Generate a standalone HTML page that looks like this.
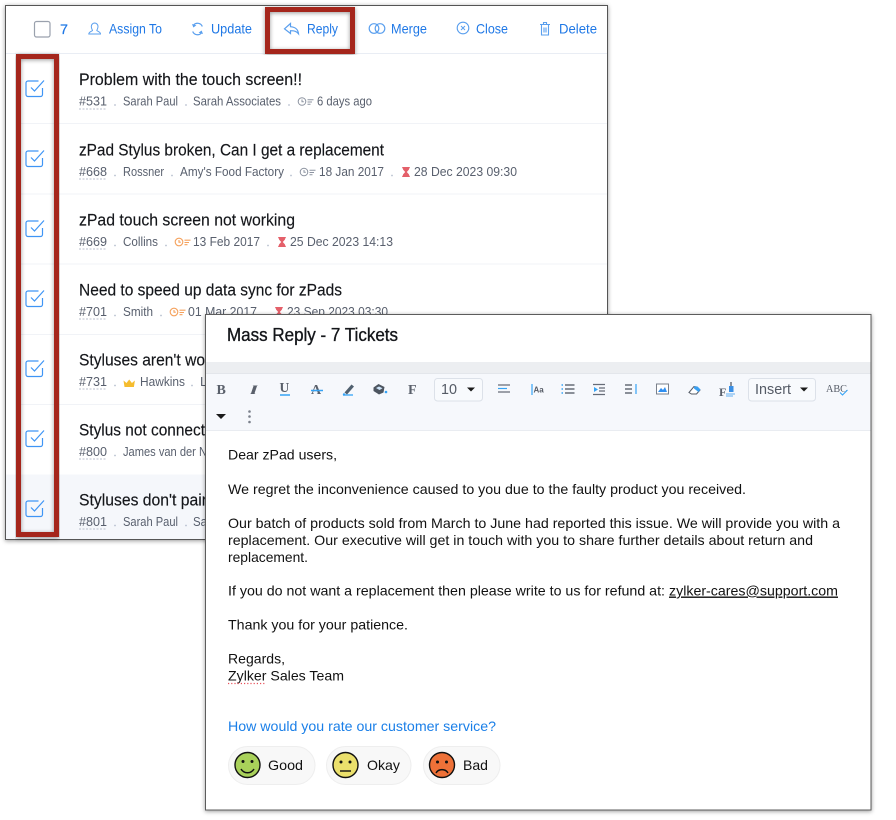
<!DOCTYPE html>
<html><head><meta charset="utf-8"><style>
html,body{margin:0;padding:0;background:#fff;width:896px;height:820px;overflow:hidden}
svg{display:block}
text{font-family:"Liberation Sans",sans-serif}
.t{font-size:17px;fill:#14161a;stroke:#14161a;stroke-width:.15px}
.m{font-size:13px;fill:#59606e}
.a{font-size:14px;fill:#1f78e6}
.b{font-size:14px;fill:#111}
.s{font-family:"Liberation Serif",serif;font-weight:bold;fill:#5a606b}
</style></head><body>
<svg width="896" height="820" viewBox="0 0 896 820" xmlns="http://www.w3.org/2000/svg">
<defs>
<filter id="s" x="-8%" y="-8%" width="116%" height="116%"><feDropShadow dx="0" dy="1" stdDeviation="2" flood-color="#000" flood-opacity=".4"/></filter>
<g id="cb" fill="none" stroke="#3f95f5" stroke-width="1.200"><path d="M42.500 88v6.500a2 2 0 0 1-2 2H28a2 2 0 0 1-2-2V83a2 2 0 0 1 2-2h10.500"/><path d="M31 87.500l3.500 3.500 9.500-10.500"/></g>
<g id="clk" fill="none" stroke="#8c93a0" stroke-width="1"><circle cx="0" cy="0" r="3.800"/><path d="M0-2v2.200h1.800M5.500-1.800h6M5.500 0.500h4.500M5.500 2.700h3"/></g>
<g id="clko" fill="none" stroke="#f5a15c" stroke-width="1.100"><circle cx="0" cy="0" r="3.800"/><path d="M0-2v2.200h1.800M5.500-1.800h6M5.500 0.500h4.500M5.500 2.700h3"/></g>
<g id="hg"><path d="M-3.800-5h7.600v1.400h-.8v1.100L.8 0l2.200 2.500v1.100h.8V5h-7.600V3.600h.8V2.500L-.8 0-3-2.500v-1.100h-.8z" fill="#e4606a"/></g>
<path id="dash" d="M79 109h28" stroke="#b9bfcc" stroke-width="1" stroke-dasharray="2 1.500"/>
</defs>

<!-- back panel -->
<rect x="5.500" y="5.500" width="602" height="534" fill="#fff" stroke="#555" filter="url(#s)"/>
<rect x="6" y="474.500" width="601" height="64.500" fill="#f5f7fb"/>
<path d="M6 53.500h601" stroke="#e9edf4"/>
<path d="M21 123.500h586M21 194h586M21 264h586M21 334.500h586M21 404.500h586" stroke="#f1f3f7"/>

<!-- header -->
<rect x="34.500" y="21.500" width="15.500" height="15.500" rx="2" fill="#fff" stroke="#9aa1ad" stroke-width="1.200"/>
<text x="60" y="34" class="a" textLength="8" lengthAdjust="spacingAndGlyphs" style="stroke:#1f78e6;stroke-width:.2px">7</text>
<g fill="none" stroke="#5a9fee" stroke-width="1">
<path d="M94.500 23a3.500 3.500 0 0 1 3.500 3.500c0 2-1 3-1.200 4 .2.700 3.700 1.200 3.700 3.500H88.800c0-2.300 3.500-2.800 3.700-3.500-.2-1-1.200-2-1.200-4A3.500 3.500 0 0 1 94.500 23z"/>
<path d="M202.300 26.500a5.200 5.200 0 0 0-8.700-1.500M192.700 31.500a5.200 5.200 0 0 0 8.700 1.500" stroke-width="1.200"/>
<path d="M192.500 24.500l1 2.500 2.200-1.500zM202.500 33.500l-1-2.500-2.200 1.500z" fill="#5a9fee" stroke-width=".6"/>
<path d="M290.500 23.500l-6 5.300 6 4.700v-2.800c4 0 6 .5 8 3-.5-4.500-3-6.500-8-7z" stroke-width="1.200"/>
<circle cx="374" cy="28.500" r="4.800" stroke-width="1.200"/><circle cx="380" cy="28.500" r="4.800" stroke-width="1.200"/>
<circle cx="463" cy="28" r="5.800" stroke-width="1.100"/><path d="M461 26l4 4M465 26l-4 4"/>
<path d="M540 24.500h10M541.500 24.500v10.500h7V24.500M543.500 24.500v-2h3v2M544 27.500v5M546 27.500v5" stroke-width="1.100"/>
</g>
<text x="109" y="33.500" class="a" textLength="53" lengthAdjust="spacingAndGlyphs">Assign To</text>
<text x="211" y="33.500" class="a" textLength="41" lengthAdjust="spacingAndGlyphs">Update</text>
<text x="307" y="33.500" class="a" textLength="31" lengthAdjust="spacingAndGlyphs">Reply</text>
<text x="391" y="33.500" class="a" textLength="36" lengthAdjust="spacingAndGlyphs">Merge</text>
<text x="476" y="33.500" class="a" textLength="32" lengthAdjust="spacingAndGlyphs">Close</text>
<text x="559" y="33.500" class="a" textLength="38" lengthAdjust="spacingAndGlyphs">Delete</text>

<!-- rows -->
<text x="79" y="85" class="t" textLength="223" lengthAdjust="spacingAndGlyphs">Problem with the touch screen!!</text>
<text x="79" y="155.500" class="t" textLength="305" lengthAdjust="spacingAndGlyphs">zPad Stylus broken, Can I get a replacement</text>
<text x="79" y="225.500" class="t" textLength="216" lengthAdjust="spacingAndGlyphs">zPad touch screen not working</text>
<text x="79" y="295.500" class="t" textLength="263" lengthAdjust="spacingAndGlyphs">Need to speed up data sync for zPads</text>
<text x="79" y="365.500" class="t" textLength="126" lengthAdjust="spacingAndGlyphs">Styluses aren't wo</text>
<text x="79" y="435.500" class="t" textLength="126" lengthAdjust="spacingAndGlyphs">Stylus not connect</text>
<text x="79" y="505.500" class="t" textLength="128" lengthAdjust="spacingAndGlyphs">Styluses don't pair</text>

<use href="#dash"/><use href="#dash" y="70"/><use href="#dash" y="140"/><use href="#dash" y="210"/><use href="#dash" y="280"/><use href="#dash" y="350"/><use href="#dash" y="420"/>

<text class="m" x="79" y="105.500" textLength="28" lengthAdjust="spacingAndGlyphs">#531</text>
<text class="m" x="123" y="105.500" textLength="55" lengthAdjust="spacingAndGlyphs">Sarah Paul</text>
<text class="m" x="193" y="105.500" textLength="88" lengthAdjust="spacingAndGlyphs">Sarah Associates</text>
<text class="m" x="317" y="105.500" textLength="55" lengthAdjust="spacingAndGlyphs">6 days ago</text>
<text class="m" x="79" y="176" textLength="28" lengthAdjust="spacingAndGlyphs">#668</text>
<text class="m" x="123" y="176" textLength="41" lengthAdjust="spacingAndGlyphs">Rossner</text>
<text class="m" x="180" y="176" textLength="104" lengthAdjust="spacingAndGlyphs">Amy's Food Factory</text>
<text class="m" x="319" y="176" textLength="65" lengthAdjust="spacingAndGlyphs">18 Jan 2017</text>
<text class="m" x="414" y="176" textLength="103" lengthAdjust="spacingAndGlyphs">28 Dec 2023 09:30</text>
<text class="m" x="79" y="246" textLength="28" lengthAdjust="spacingAndGlyphs">#669</text>
<text class="m" x="123" y="246" textLength="35" lengthAdjust="spacingAndGlyphs">Collins</text>
<text class="m" x="193" y="246" textLength="67" lengthAdjust="spacingAndGlyphs">13 Feb 2017</text>
<text class="m" x="290" y="246" textLength="103" lengthAdjust="spacingAndGlyphs">25 Dec 2023 14:13</text>
<text class="m" x="79" y="316" textLength="28" lengthAdjust="spacingAndGlyphs">#701</text>
<text class="m" x="123" y="316" textLength="30" lengthAdjust="spacingAndGlyphs">Smith</text>
<text class="m" x="188" y="316" textLength="69" lengthAdjust="spacingAndGlyphs">01 Mar 2017</text>
<text class="m" x="287" y="316" textLength="101" lengthAdjust="spacingAndGlyphs">23 Sep 2023 03:30</text>
<text class="m" x="79" y="386" textLength="28" lengthAdjust="spacingAndGlyphs">#731</text>
<text class="m" x="140" y="386" textLength="45" lengthAdjust="spacingAndGlyphs">Hawkins</text>
<text class="m" x="200" y="386">L</text>
<text class="m" x="79" y="456" textLength="28" lengthAdjust="spacingAndGlyphs">#800</text>
<text class="m" x="123" y="456" textLength="84" lengthAdjust="spacingAndGlyphs">James van der N</text>
<text class="m" x="79" y="526" textLength="28" lengthAdjust="spacingAndGlyphs">#801</text>
<text class="m" x="123" y="526" textLength="55" lengthAdjust="spacingAndGlyphs">Sarah Paul</text>
<text class="m" x="193" y="526" textLength="14" lengthAdjust="spacingAndGlyphs">Sa</text>
<g fill="#b8c0cf">
<circle cx="115" cy="105" r=".9"/><circle cx="186" cy="105" r=".9"/><circle cx="289" cy="105" r=".9"/>
<circle cx="115" cy="175.500" r=".9"/><circle cx="172" cy="175.500" r=".9"/><circle cx="291" cy="175.500" r=".9"/><circle cx="392" cy="175.500" r=".9"/>
<circle cx="115" cy="245.500" r=".9"/><circle cx="166" cy="245.500" r=".9"/><circle cx="268" cy="245.500" r=".9"/>
<circle cx="115" cy="315.500" r=".9"/><circle cx="161" cy="315.500" r=".9"/><circle cx="266" cy="315.500" r=".9"/>
<circle cx="115" cy="385.500" r=".9"/><circle cx="192" cy="385.500" r=".9"/>
<circle cx="115" cy="455.500" r=".9"/>
<circle cx="115" cy="525.500" r=".9"/><circle cx="186" cy="525.500" r=".9"/>
</g>
<use href="#clk" x="302" y="101.500"/><use href="#clk" x="304" y="172"/>
<use href="#clko" x="179" y="242"/><use href="#clko" x="174" y="312"/>
<use href="#hg" x="406" y="172"/><use href="#hg" x="282" y="242"/><use href="#hg" x="279" y="312"/>
<path d="M123.500 380.500l3 2.500 2.700-3.500 2.700 3.500 3-2.500-1 6.500h-9.400z" fill="#f5bc2e"/>

<!-- checkboxes -->
<use href="#cb"/><use href="#cb" y="70"/><use href="#cb" y="140"/><use href="#cb" y="210"/><use href="#cb" y="280"/><use href="#cb" y="350"/><use href="#cb" y="420"/>

<!-- red highlights -->
<rect x="18.500" y="56.500" width="38" height="478" fill="none" stroke="#a5281b" stroke-width="5" filter="url(#s)"/>
<rect x="267.500" y="9.500" width="85" height="42" fill="none" stroke="#a5281b" stroke-width="5" filter="url(#s)"/>

<!-- front panel -->
<rect x="205.500" y="314.500" width="665.500" height="495.500" fill="#fff" stroke="#5c5c5c" filter="url(#s)"/>
<text x="227" y="341" style="font-size:18px;fill:#14161a;stroke:#14161a;stroke-width:.35px" textLength="171" lengthAdjust="spacingAndGlyphs">Mass Reply - 7 Tickets</text>
<rect x="206" y="362" width="664.500" height="11" fill="#eceef1"/>
<rect x="206" y="373" width="664.500" height="57" fill="#f6f8fc"/>
<path d="M206 373.500h664.500" stroke="#e3e6eb"/><path d="M206 430.500h664.500" stroke="#e9ecf1"/>

<!-- toolbar -->
<text x="216.500" y="394" class="s" style="font-size:14px">B</text>
<path d="M250 394l1-.6 2.500-7.400-1-.5h5.500l-1 .5-2.500 7.400 1 .6z" fill="#5a606b"/>
<text x="279.500" y="392" class="s" style="font-size:13.500px">U</text>
<text x="311" y="394" class="s" style="font-size:14px">A</text>
<text x="408" y="394" class="s" style="font-size:14px">F</text>
<text x="719" y="396" class="s" style="font-size:12px">F</text>
<path d="M280 395h10" stroke="#35a3f5" stroke-width="1.500"/>
<path d="M311 390.500h12" stroke="#35a3f5" stroke-width="1.500"/>
<path d="M344.500 392.500l7-8 2.500 2-7 8z" fill="#50606f"/><path d="M343 395h10" stroke="#35a3f5" stroke-width="1.300"/><circle cx="344" cy="394.500" r="1.200" fill="#35a3f5"/>
<path d="M373.500 387.500l5-3.500 6 3-1 5.500-4.500 2-5.500-3.500z" fill="#4d5560"/><path d="M376 388l3-1.500 3.500 1.800-3 1.700z" fill="#cfe6fb"/><circle cx="386" cy="392" r="1.300" fill="#35a3f5"/>
<path d="M498 385h12M498 392h12" stroke="#666c77" stroke-width="1.200"/><path d="M498 388.500h9" stroke="#35a3f5" stroke-width="1.200"/>
<path d="M532 384v11" stroke="#35a3f5" stroke-width="1.200"/>
<text x="533.500" y="392.500" style="font-size:8px;font-weight:bold" fill="#555b66">Aa</text>
<path d="M561.500 385h1.500M561.500 389h1.500M561.500 393h1.500" stroke="#35a3f5" stroke-width="1.500"/>
<path d="M565 385h9.500M565 389h9.500M565 393h9.500" stroke="#666c77" stroke-width="1.400"/>
<path d="M593 384.500h12M599 388h6M599 391h6M593 394.500h12" stroke="#666c77" stroke-width="1.200"/><path d="M594 387l4 2.500-4 2.500z" fill="#35a3f5"/>
<path d="M625 385h7M625 389h7M625 393h7" stroke="#666c77" stroke-width="1.400"/><path d="M636 384v10" stroke="#35a3f5" stroke-width="1.200"/>
<rect x="656.500" y="384" width="12" height="10" fill="#fff" stroke="#7a808b"/><path d="M658 392l3-4 2 2 2-3 2 5z" fill="#2f8ef0"/>
<path d="M689 392.500l5-6 3 .5 3 3-3.500 4h-5z" fill="#fff" stroke="#555b66"/><path d="M694 386.500h3.500l3 3-2 2.500-4.500-3.500z" fill="#3aa0f2"/>
<rect x="729" y="386" width="4.500" height="6" fill="#3a8fe5"/><path d="M731 382v4" stroke="#555b66" stroke-width="1.300"/><path d="M726 394h9M726 396h7" stroke="#7fbdf3" stroke-width="1.200"/>
<text x="826" y="392" style="font-size:11px;font-family:'Liberation Serif',serif" fill="#555b66" textLength="21" lengthAdjust="spacingAndGlyphs">ABC</text>
<path d="M840 392.500l2.500 2.500 5-5" fill="none" stroke="#35a3f5" stroke-width="1.100"/>

<rect x="434.500" y="378.500" width="48" height="22.500" rx="3" fill="#f8fafd" stroke="#dce1e9"/>
<text x="441" y="394" style="font-size:15px" fill="#555b66" textLength="16" lengthAdjust="spacingAndGlyphs">10</text>
<path d="M467 387.500h8l-4 4z" fill="#1b1b1b"/>
<rect x="748.500" y="378.500" width="67" height="22.500" rx="3" fill="#f8fafd" stroke="#dce1e9"/>
<text x="755" y="394" style="font-size:15px" fill="#555b66" textLength="36" lengthAdjust="spacingAndGlyphs">Insert</text>
<path d="M800 387.500h8l-4 4z" fill="#1b1b1b"/>
<path d="M216 414h10l-5 5z" fill="#1b1b1b"/>
<g fill="#7a808b"><circle cx="249.500" cy="411.500" r="1.300"/><circle cx="249.500" cy="416.500" r="1.300"/><circle cx="249.500" cy="422" r="1.300"/></g>

<!-- email body -->
<text class="b" x="228" y="459.500" textLength="109" lengthAdjust="spacingAndGlyphs">Dear zPad users,</text>
<text class="b" x="228" y="494" textLength="518" lengthAdjust="spacingAndGlyphs">We regret the inconvenience caused to you due to the faulty product you received.</text>
<text class="b" x="228" y="528" textLength="612" lengthAdjust="spacingAndGlyphs">Our batch of products sold from March to June had reported this issue. We will provide you with a</text>
<text class="b" x="228" y="545" textLength="585" lengthAdjust="spacingAndGlyphs">replacement. Our executive will get in touch with you to share further details about return and</text>
<text class="b" x="228" y="562" textLength="80" lengthAdjust="spacingAndGlyphs">replacement.</text>
<text class="b" x="228" y="595.500" textLength="437" lengthAdjust="spacingAndGlyphs">If you do not want a replacement then please write to us for refund at:</text>
<text class="b" x="669" y="595.500" textLength="169" lengthAdjust="spacingAndGlyphs" text-decoration="underline">zylker-cares@support.com</text>
<text class="b" x="228" y="629.500" textLength="180" lengthAdjust="spacingAndGlyphs">Thank you for your patience.</text>
<text class="b" x="228" y="663.500" textLength="57" lengthAdjust="spacingAndGlyphs">Regards,</text>
<text class="b" x="228" y="680.500" textLength="116" lengthAdjust="spacingAndGlyphs">Zylker Sales Team</text>
<path d="M228 683.500h38" stroke="#e8505a" stroke-width="1.200" stroke-dasharray="1.200 2"/>
<text class="b" x="228" y="731" textLength="268" lengthAdjust="spacingAndGlyphs" style="fill:#1a7fe8">How would you rate our customer service?</text>

<!-- rating pills -->
<rect x="228.500" y="746.500" width="86.500" height="38" rx="19" fill="#f8f8f8" stroke="#eeeeee"/>
<rect x="326.500" y="746.500" width="84.500" height="38" rx="19" fill="#f8f8f8" stroke="#eeeeee"/>
<rect x="423.500" y="746.500" width="76.500" height="38" rx="19" fill="#f8f8f8" stroke="#eeeeee"/>
<g stroke="#111" stroke-width="1.400">
<circle cx="247.500" cy="765" r="12.500" fill="#a9d15a"/>
<circle cx="345.500" cy="765" r="12.500" fill="#ebe06c"/>
<circle cx="442" cy="765" r="12.500" fill="#ee7138"/>
<path d="M241 769c3 5 10 5 13 0" fill="none"/>
<path d="M340 771h11" fill="none"/>
<path d="M436 773c2.500-4.500 9.500-4.500 12 0" fill="none"/>
</g>
<g fill="#111">
<circle cx="243" cy="761.500" r="1.500"/><circle cx="252" cy="761.500" r="1.500"/>
<circle cx="341" cy="762" r="1.500"/><circle cx="350" cy="762" r="1.500"/>
<circle cx="437.500" cy="762" r="1.500"/><circle cx="446.500" cy="762" r="1.500"/>
</g>
<text class="b" x="268" y="770" textLength="35" lengthAdjust="spacingAndGlyphs">Good</text>
<text class="b" x="367" y="770" textLength="33" lengthAdjust="spacingAndGlyphs">Okay</text>
<text class="b" x="463" y="770" textLength="25" lengthAdjust="spacingAndGlyphs">Bad</text>
</svg>
</body></html>
